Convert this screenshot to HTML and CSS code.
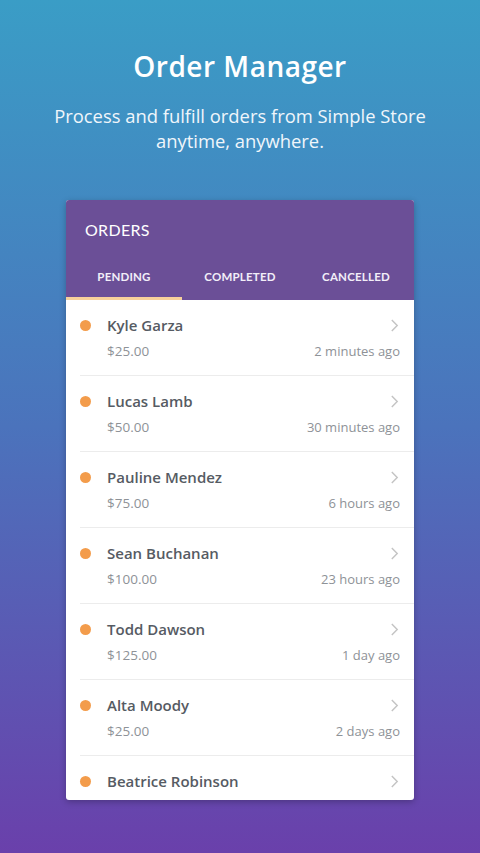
FILE: index.html
```html
<!DOCTYPE html>
<html>
<head>
<meta charset="utf-8">
<link rel="stylesheet" href="styles.css">
</head>
<body>
<div class="page">
  <h1 class="title">Order Manager</h1>
  <p class="subtitle">Process and fulfill orders from Simple Store<br>anytime, anywhere.</p>
  <div class="card">
    <div class="card-head">
      <div class="card-title">ORDERS</div>
      <div class="tabs">
        <div class="tab active">PENDING</div>
        <div class="tab">COMPLETED</div>
        <div class="tab">CANCELLED</div>
      </div>
    </div>
    <div class="list">
      <div class="row"><span class="dot"></span><div class="info"><div class="line1"><span class="name">Kyle Garza</span><svg class="chev" viewBox="0 0 10 16"><path d="M2 2l6 6-6 6"/></svg></div><div class="line2"><span class="price">$25.00</span><span class="time">2 minutes ago</span></div></div></div>
      <div class="row"><span class="dot"></span><div class="info"><div class="line1"><span class="name">Lucas Lamb</span><svg class="chev" viewBox="0 0 10 16"><path d="M2 2l6 6-6 6"/></svg></div><div class="line2"><span class="price">$50.00</span><span class="time">30 minutes ago</span></div></div></div>
      <div class="row"><span class="dot"></span><div class="info"><div class="line1"><span class="name">Pauline Mendez</span><svg class="chev" viewBox="0 0 10 16"><path d="M2 2l6 6-6 6"/></svg></div><div class="line2"><span class="price">$75.00</span><span class="time">6 hours ago</span></div></div></div>
      <div class="row"><span class="dot"></span><div class="info"><div class="line1"><span class="name">Sean Buchanan</span><svg class="chev" viewBox="0 0 10 16"><path d="M2 2l6 6-6 6"/></svg></div><div class="line2"><span class="price">$100.00</span><span class="time">23 hours ago</span></div></div></div>
      <div class="row"><span class="dot"></span><div class="info"><div class="line1"><span class="name">Todd Dawson</span><svg class="chev" viewBox="0 0 10 16"><path d="M2 2l6 6-6 6"/></svg></div><div class="line2"><span class="price">$125.00</span><span class="time">1 day ago</span></div></div></div>
      <div class="row"><span class="dot"></span><div class="info"><div class="line1"><span class="name">Alta Moody</span><svg class="chev" viewBox="0 0 10 16"><path d="M2 2l6 6-6 6"/></svg></div><div class="line2"><span class="price">$25.00</span><span class="time">2 days ago</span></div></div></div>
      <div class="row last"><span class="dot"></span><div class="info"><div class="line1"><span class="name">Beatrice Robinson</span><svg class="chev" viewBox="0 0 10 16"><path d="M2 2l6 6-6 6"/></svg></div></div></div>
    </div>
  </div>
</div>
</body>
</html>
```
FILE: styles.css
```css
* { box-sizing: border-box; }
html, body { margin: 0; padding: 0; }
body {
  width: 480px;
  height: 853px;
  overflow: hidden;
  font-family: "Open Sans", "Noto Sans", sans-serif;
  background: linear-gradient(180deg, #3a9dc6 0%, #4b73bc 50%, #6a40ab 100%);
}
.page {
  display: flex;
  flex-direction: column;
  align-items: center;
  padding-top: 47px;
}
.title {
  margin: 0;
  color: #fff;
  font-weight: 600;
  font-size: 28px;
  line-height: 38px;
  letter-spacing: 0.5px;
}
.subtitle {
  margin: 18px 0 0;
  color: #f0f6fb;
  font-size: 18.4px;
  line-height: 25px;
  text-align: center;
}
.card {
  margin-top: 47px;
  width: 348px;
  height: 600px;
  background: #fff;
  border-radius: 3px;
  overflow: hidden;
  box-shadow: 0 2px 6px rgba(0,0,0,0.25);
}
.card-head {
  background: #6b4f97;
}
.card-title {
  padding: 20px 0 0 19px;
  height: 58px;
  color: #fff;
  font-family: "Lato", sans-serif;
  font-size: 16px;
  letter-spacing: 0.3px;
  line-height: 20px;
}
.tabs {
  display: flex;
  height: 42px;
}
.tab {
  flex: 1;
  text-align: center;
  color: #f2eef8;
  font-family: "Lato", sans-serif;
  font-weight: 700;
  font-size: 11.5px;
  letter-spacing: 0.2px;
  line-height: 20px;
  padding-top: 9px;
  border-bottom: 3px solid transparent;
}
.tab.active {
  border-bottom-color: #f7d19b;
}
.list {
  display: flex;
  flex-direction: column;
}
.row {
  display: flex;
  height: 76px;
  margin-left: 14px;
  border-bottom: 1px solid #ececec;
}
.row.last { border-bottom: none; }
.dot {
  width: 11px;
  height: 11px;
  border-radius: 50%;
  background: #f39c4b;
  margin-top: 20px;
  flex: none;
}
.info {
  flex: 1;
  padding-left: 16px;
  padding-right: 14px;
  display: flex;
  flex-direction: column;
}
.line1 {
  display: flex;
  justify-content: space-between;
  align-items: center;
  height: 26px;
  margin-top: 12px;
}
.name {
  color: #565b63;
  font-weight: 600;
  font-size: 15px;
}
.chev {
  width: 9px;
  height: 15px;
  fill: none;
  stroke: #c4c4c4;
  stroke-width: 1.6;
  margin-right: 1px;
}
.line2 {
  display: flex;
  justify-content: space-between;
  margin-top: 1px;
  font-size: 13px;
  color: #8e9297;
  line-height: 24px;
}
.price { font-size: 13.5px; }
```
